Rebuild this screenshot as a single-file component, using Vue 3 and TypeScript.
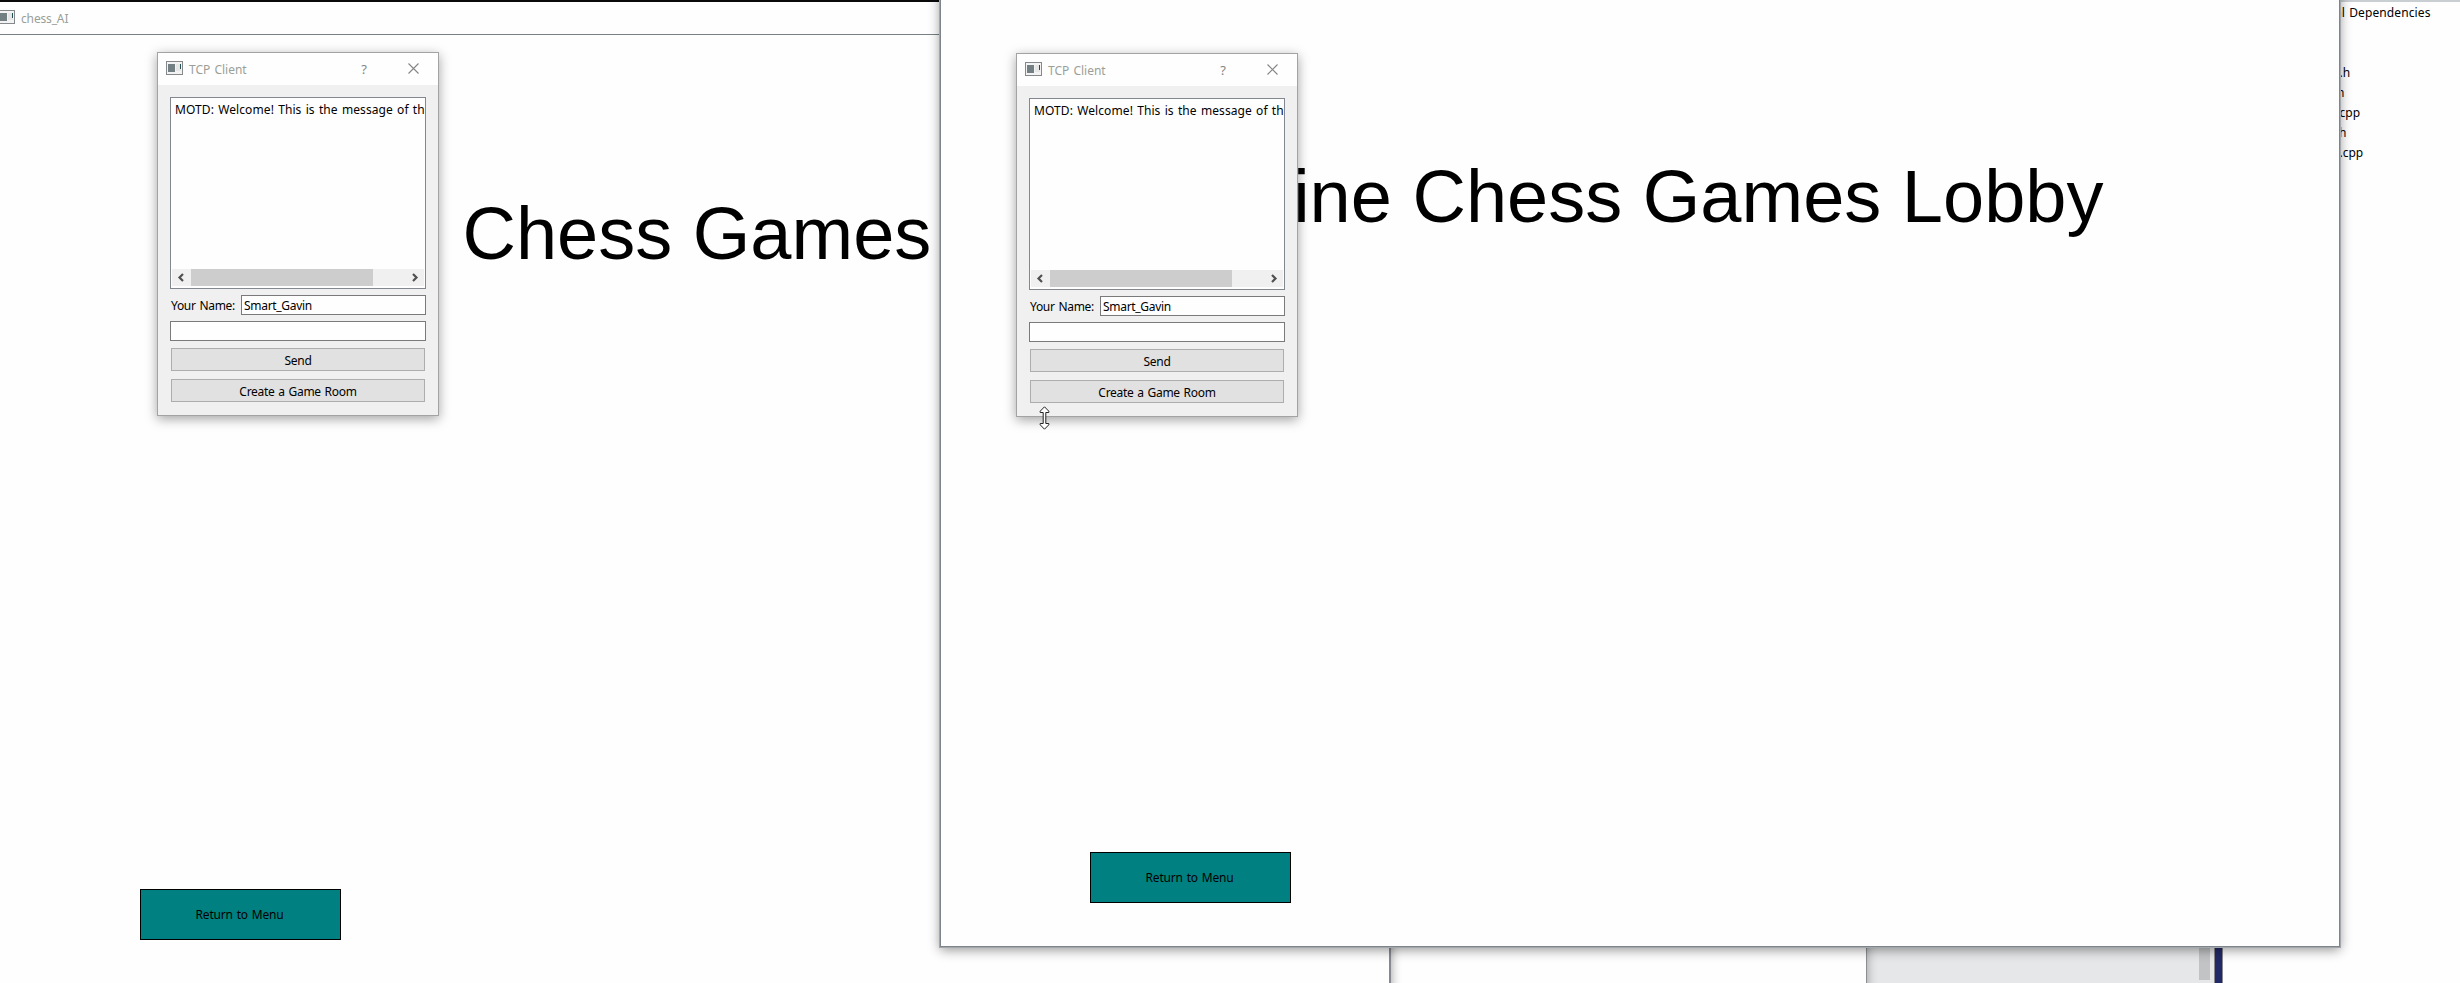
<script setup lang="ts">
interface Dialog {
  id: string
  name: string
}

const dialogs: Dialog[] = [
  { id: 'first', name: 'Smart_Gavin' },
  { id: 'second', name: 'Smart_Gavin' },
]

const message = 'MOTD: Welcome! This is the message of th'
const heading = 'Online Chess Games Lobby'

const files: string[] = ['', '.h', 'h', 'cpp', 'h', '.cpp']
</script>

<template>
  <main class="desktop">
    <aside class="explorer">
      <p class="tree-row top">al Dependencies</p>
      <p v-for="(file, i) in files" :key="i" class="tree-row" :class="`row-${i}`">{{ file }}</p>
    </aside>
    <div class="output-pane"><div class="output-scroll"></div></div>
    <div class="navy-frame"></div>
    <div class="blank-window"></div>

    <section class="window back">
      <header class="window-title">
        <svg class="app-icon" width="17" height="14" viewBox="0 0 17 14">
          <rect x=".5" y=".5" width="16" height="13" fill="#f3f3f3" stroke="#85898c" />
          <rect x="2" y="3" width="7" height="8" fill="#728084" />
          <rect x="10" y="3" width="5" height="7" fill="#e6e6e6" />
          <rect x="14" y="3" width="1" height="5" fill="#245054" />
        </svg>
        <span>chess_AI</span>
      </header>
      <h1 class="heading">{{ heading }}</h1>
      <button class="menu-button">Return to Menu</button>
    </section>

    <section class="window front">
      <h1 class="heading">{{ heading }}</h1>
      <button class="menu-button">Return to Menu</button>
    </section>

    <section v-for="d in dialogs" :key="d.id" class="dialog" :class="d.id">
      <header class="dialog-title">
        <svg class="app-icon" width="17" height="14" viewBox="0 0 17 14">
          <rect x=".5" y=".5" width="16" height="13" fill="#f3f3f3" stroke="#85898c" />
          <rect x="2" y="3" width="7" height="8" fill="#728084" />
          <rect x="10" y="3" width="5" height="7" fill="#e6e6e6" />
          <rect x="14" y="3" width="1" height="5" fill="#245054" />
        </svg>
        <span class="dialog-name">TCP Client</span>
        <span class="help">?</span>
        <svg class="close" width="11" height="11" viewBox="0 0 11 11">
          <path d="M.5 .5 10.5 10.5M10.5 .5 .5 10.5" fill="none" stroke="#858585" stroke-width="1.1" />
        </svg>
      </header>
      <div class="dialog-body">
        <div class="list">
          <p class="message">{{ message }}</p>
          <div class="scrollbar">
            <svg class="arrow" width="19" height="17" viewBox="0 0 19 17">
              <path d="M11 5 7.5 8.5 11 12" fill="none" stroke="#505050" stroke-width="2.2" />
            </svg>
            <div class="thumb"></div>
            <svg class="arrow right" width="19" height="17" viewBox="0 0 19 17">
              <path d="M8 5 11.5 8.5 8 12" fill="none" stroke="#505050" stroke-width="2.2" />
            </svg>
          </div>
        </div>
        <div class="name-row">
          <span class="label">Your Name:</span>
          <div class="field">{{ d.name }}</div>
        </div>
        <div class="field wide"></div>
        <button class="action send">Send</button>
        <button class="action create">Create a Game Room</button>
      </div>
    </section>

    <svg class="cursor" width="11" height="24" viewBox="0 0 11 24">
      <path d="M5.5 .8 9.8 5.2V6.5H6.8V17.5H9.8V18.8L5.5 23.2 1.2 18.8V17.5H4.2V6.5H1.2V5.2Z" fill="#fff" stroke="#222" stroke-width="1" />
    </svg>
  </main>
</template>

<style scoped>
.desktop {
  position: relative;
  width: 2460px;
  height: 983px;
  overflow: hidden;
  background: #fefefe;
  color: #000;
  font: 12px/16px "Noto Sans", "Open Sans", sans-serif;
  word-spacing: 1px;
}

p,
h1 {
  margin: 0;
}

.explorer {
  position: absolute;
  left: 2330px;
  top: 0;
  width: 130px;
  height: 983px;
  box-sizing: border-box;
  border-top: 2px solid #c9ced3;
}

.tree-row {
  height: 20px;
  line-height: 22px;
  padding-left: 9.5px;
  white-space: nowrap;
}

.tree-row.top {
  padding-left: 5px;
  letter-spacing: 0.1px;
}

.row-0 {
  height: 40px;
}

.row-2 {
  padding-left: 7px;
}

.row-4 {
  padding-left: 9px;
}

.output-pane {
  position: absolute;
  left: 1866px;
  top: 900px;
  width: 348px;
  height: 83px;
  background: #e6e7e8;
}

.output-scroll {
  width: 11px;
  height: 80px;
  margin-left: 333px;
  background: #c2c3c5;
}

.navy-frame {
  position: absolute;
  left: 2214px;
  top: 900px;
  width: 9px;
  height: 83px;
  box-sizing: border-box;
  border: solid #8a8a8e;
  border-width: 0 1px;
  background: #212966;
}

.blank-window {
  position: absolute;
  left: 1300px;
  top: 900px;
  width: 567px;
  height: 100px;
  box-sizing: border-box;
  border-right: 1px solid #8b8d90;
  background: #fefefe;
  box-shadow: 0 3px 10px rgba(0, 0, 0, 0.35);
}

.window {
  position: absolute;
  box-sizing: border-box;
  background: #fefefe;
}

.window.back {
  left: -20px;
  top: 0;
  width: 1411px;
  height: 1010px;
  border-top: 2px solid #0a0a0a;
  border-right: 2px solid #868a90;
  box-shadow: 0 3px 10px rgba(0, 0, 0, 0.4);
}

.window-title {
  display: flex;
  height: 33px;
  box-sizing: border-box;
  padding: 8px 0 0 18px;
  border-bottom: 1px solid #788085;
  color: #9a9f98;
}

.window-title span {
  margin: 1px 0 0 6px;
  letter-spacing: -0.15px;
}

.window.front {
  left: 940px;
  top: -20px;
  width: 1400px;
  height: 967px;
  border: 1px solid #7d848c;
  box-shadow: 0 0 0 1px #a3a7ac, 0 3px 11px rgba(0, 0, 0, 0.42);
}

.heading {
  font: 400 74px/84px "Liberation Sans", Arial, sans-serif;
  white-space: nowrap;
  word-spacing: 0;
}

.back .heading {
  padding: 157px 0 0 248px;
}

.front .heading {
  padding: 174px 0 0 237px;
}

.menu-button {
  display: block;
  width: 201px;
  height: 51px;
  padding: 1px 2px 0 0;
  border: 1px solid #000;
  border-radius: 0;
  background: #008080;
  color: #000;
  font: inherit;
  letter-spacing: -0.2px;
  word-spacing: 1px;
}

.back .menu-button {
  margin: 613px 0 0 160px;
}

.front .menu-button {
  margin: 613px 0 0 149px;
}

.dialog {
  position: absolute;
  width: 282px;
  height: 364px;
  box-sizing: border-box;
  border: 1px solid #a3a3a3;
  background: #f0f0f0;
  box-shadow: 0 3px 11px rgba(0, 0, 0, 0.36);
}

.dialog.first {
  left: 157px;
  top: 52px;
}

.dialog.second {
  left: 1016px;
  top: 53px;
}

.dialog-title {
  display: flex;
  height: 32px;
  box-sizing: border-box;
  padding: 8px 19px 0 8px;
  background: #fefefe;
  color: #9a9f98;
}

.dialog-name {
  margin: 1px auto 0 6px;
}

.help {
  margin-right: 41px;
  color: #858585;
  font-size: 13px;
}

.close {
  margin-top: 2px;
}

.dialog-body {
  padding: 12px;
}

.list {
  display: flex;
  flex-direction: column;
  justify-content: space-between;
  height: 192px;
  box-sizing: border-box;
  padding: 3px 1px 2px;
  border: 1px solid #828790;
  background: #fefefe;
}

.message {
  height: 18px;
  line-height: 18px;
  padding-left: 3px;
  white-space: nowrap;
  letter-spacing: 0.09px;
}

.scrollbar {
  display: flex;
  height: 17px;
  background: #f0f0f0;
}

.thumb {
  width: 182px;
  background: #cdcdcd;
}

.arrow.right {
  margin-left: auto;
}

.name-row {
  display: flex;
  justify-content: space-between;
  margin: 6px 0;
}

.label {
  padding: 3px 0 0 1px;
  letter-spacing: -0.3px;
}

.field {
  width: 185px;
  height: 20px;
  box-sizing: border-box;
  padding: 2px 2px 0;
  border: 1px solid #7a7a7a;
  background: #fefefe;
  letter-spacing: -0.3px;
}

.field.wide {
  width: 256px;
}

.action {
  display: block;
  width: 254px;
  height: 23px;
  margin: 7px 1px 0;
  padding: 3px 0 0;
  border: 1px solid #adadad;
  border-radius: 0;
  background: #e1e1e1;
  color: #000;
  font: inherit;
  letter-spacing: -0.3px;
  word-spacing: 1px;
}

.action.create {
  margin-top: 8px;
}

.cursor {
  position: absolute;
  left: 1039px;
  top: 406px;
}
</style>

<style>
body {
  margin: 0;
  overflow: hidden;
}
</style>
